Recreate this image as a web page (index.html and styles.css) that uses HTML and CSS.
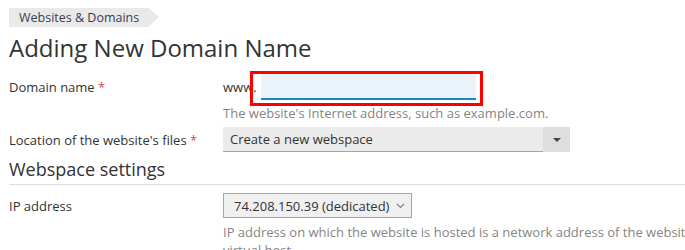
FILE: index.html
```html
<!DOCTYPE html>
<html lang="en">

<head>
    <meta charset="UTF-8">
    <meta name="viewport" content="width=device-width, initial-scale=1.0">
    <title>Adding New Domain Name</title>
    <link rel="stylesheet" href="styles.css">
</head>

<body>
    <div class="page">

        <div class="breadcrumb">
            <span class="crumb">Websites &amp; Domains</span>
        </div>

        <h1 class="page-title">Adding New Domain Name</h1>

        <div class="form-row row-domain">
            <div class="label">Domain name <span class="req">*</span></div>
            <div class="field">
                <div class="domain-line">
                    <span class="prefix">www.</span>
                    <div class="domain-input">
                        <input type="text" value="">
                        <div class="highlight"></div>
                    </div>
                </div>
                <div class="hint">The website's Internet address, such as example.com.</div>
            </div>
        </div>

        <div class="form-row row-location">
            <div class="label">Location of the website's files <span class="req">*</span></div>
            <div class="field">
                <div class="combo">
                    <span class="combo-text">Create a new webspace</span>
                    <span class="combo-arrow"></span>
                </div>
            </div>
        </div>

        <h2 class="section-title">Webspace settings</h2>

        <div class="form-row row-ip">
            <div class="label">IP address</div>
            <div class="field">
                <div class="select">
                    <span>74.208.150.39 (dedicated)</span>
                    <svg width="9" height="6" viewBox="0 0 9 6">
                        <path d="M1 1 L4.5 4.5 L8 1" fill="none" stroke="#808080" stroke-width="1.1"/>
                    </svg>
                </div>
                <div class="hint hint-ip">IP address on which the website is hosted is a network address of the website's virtual host.</div>
            </div>
        </div>

    </div>
</body>

</html>
```

FILE: styles.css
```css
html {
    overflow: hidden;
}

body {
    margin: 0;
    background: #ffffff;
    color: #333333;
    font-family: "Open Sans", Arial, sans-serif;
    font-size: 13px;
}

.page {
    padding: 8px 0 0 9px;
    width: 760px;
}

/* breadcrumb */

.breadcrumb {
    display: flex;
}

.crumb {
    position: relative;
    display: block;
    height: 19px;
    line-height: 19px;
    padding: 0 10px 0 10px;
    background: #e9e9e9;
    font-size: 12.5px;
    color: #3b3b55;
    margin-right: 10px;
}

.crumb::after {
    content: "";
    position: absolute;
    right: -10px;
    top: 0;
    border-top: 9.5px solid transparent;
    border-bottom: 9.5px solid transparent;
    border-left: 10px solid #e9e9e9;
}

.page-title {
    margin: 6px 0 0 0;
    font-size: 24px;
    font-weight: 400;
    line-height: 30px;
    color: #333333;
}

/* form rows */

.form-row {
    display: grid;
    grid-template-columns: 214px 520px;
}

.label {
    line-height: 20px;
}

.req {
    color: #e0474c;
}

.row-domain {
    margin-top: 10px;
}

.row-domain .label {
    padding-top: 4px;
}

.domain-line {
    display: flex;
    align-items: center;
    height: 27px;
}

.prefix {
    width: 38px;
}

.domain-input {
    position: relative;
}

.domain-input input {
    display: block;
    box-sizing: border-box;
    width: 215px;
    height: 27px;
    border: none;
    border-bottom: 2px solid #1d87c8;
    background: #ebf3fa;
    outline: none;
    font: inherit;
    padding: 0 6px;
}

.highlight {
    position: absolute;
    left: -11px;
    top: -2px;
    width: 227px;
    height: 29px;
    border: 3px solid #ff0000;
}

.hint {
    color: #858585;
    line-height: 18px;
    margin-top: 4px;
}

.row-location {
    margin-top: 5px;
}

.row-location .label {
    padding-top: 3px;
}

.combo {
    display: flex;
    width: 347px;
    height: 25px;
    background: #ebebeb;
}

.combo-text {
    flex: 1;
    line-height: 24px;
    padding-left: 7px;
    border-bottom: 1px solid #9aa9b8;
}

.combo-arrow {
    position: relative;
    width: 27px;
    background: #dedede;
}

.combo-arrow::after {
    content: "";
    position: absolute;
    left: 10px;
    top: 11px;
    border-left: 4px solid transparent;
    border-right: 4px solid transparent;
    border-top: 4px solid #444444;
}

/* section */

.section-title {
    margin: 5px 0 0 0;
    font-size: 18px;
    font-weight: 400;
    line-height: 24px;
    padding-bottom: 3px;
    border-bottom: 1px solid #dddddd;
    color: #333333;
}

.row-ip {
    margin-top: 8px;
}

.row-ip .label {
    padding-top: 3px;
}

.select {
    display: flex;
    align-items: center;
    justify-content: space-between;
    box-sizing: border-box;
    width: 189px;
    height: 25px;
    padding: 0 6px 0 10px;
    background: #f0f0f0;
    border: 1px solid #a6a6a6;
    color: #333333;
}

.hint-ip {
    margin-top: 5px;
}
```
